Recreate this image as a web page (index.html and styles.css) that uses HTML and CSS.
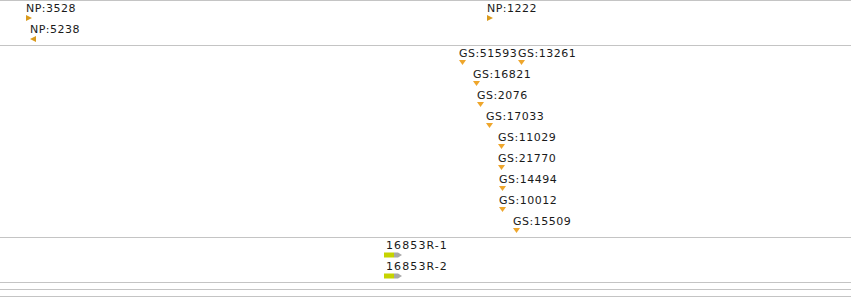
FILE: index.html
```html
<!DOCTYPE html>
<html lang="en">
<head>
  <meta charset="UTF-8" />
  <title>Tracks</title>
  <link rel="stylesheet" href="styles.css">
</head>
<body>
  <div class="tracks">
    <div class="track track-np">
      <div class="feat" style="left:26px;top:1px">
        <span class="label">NP:3528</span>
        <svg class="tri" width="7" height="6"><polygon points="0,0 6,3 0,6" /></svg>
      </div>
      <div class="feat" style="left:30px;top:22px">
        <span class="label">NP:5238</span>
        <svg class="tri" width="7" height="6"><polygon points="6,0 0,3 6,6" /></svg>
      </div>
      <div class="feat" style="left:487px;top:1px">
        <span class="label">NP:1222</span>
        <svg class="tri" width="7" height="6"><polygon points="0,0 6,3 0,6" /></svg>
      </div>
    </div>

    <div class="track track-gs">
      <div class="feat" style="left:459px;top:1px"><span class="label">GS:51593</span><svg class="down" width="7" height="6"><polygon points="0,0 7,0 3.5,5" /></svg></div>
      <div class="feat" style="left:518px;top:1px"><span class="label">GS:13261</span><svg class="down" width="7" height="6"><polygon points="0,0 7,0 3.5,5" /></svg></div>
      <div class="feat" style="left:473px;top:22px"><span class="label">GS:16821</span><svg class="down" width="7" height="6"><polygon points="0,0 7,0 3.5,5" /></svg></div>
      <div class="feat" style="left:477px;top:43px"><span class="label">GS:2076</span><svg class="down" width="7" height="6"><polygon points="0,0 7,0 3.5,5" /></svg></div>
      <div class="feat" style="left:486px;top:64px"><span class="label">GS:17033</span><svg class="down" width="7" height="6"><polygon points="0,0 7,0 3.5,5" /></svg></div>
      <div class="feat" style="left:498px;top:85px"><span class="label">GS:11029</span><svg class="down" width="7" height="6"><polygon points="0,0 7,0 3.5,5" /></svg></div>
      <div class="feat" style="left:498px;top:106px"><span class="label">GS:21770</span><svg class="down" width="7" height="6"><polygon points="0,0 7,0 3.5,5" /></svg></div>
      <div class="feat" style="left:499px;top:127px"><span class="label">GS:14494</span><svg class="down" width="7" height="6"><polygon points="0,0 7,0 3.5,5" /></svg></div>
      <div class="feat" style="left:499px;top:148px"><span class="label">GS:10012</span><svg class="down" width="7" height="6"><polygon points="0,0 7,0 3.5,5" /></svg></div>
      <div class="feat" style="left:513px;top:169px"><span class="label">GS:15509</span><svg class="down" width="7" height="6"><polygon points="0,0 7,0 3.5,5" /></svg></div>
    </div>

    <div class="track track-gene">
      <div class="feat" style="left:384px;top:1px">
        <span class="label gene-label">16853R-1</span>
        <svg class="gene" width="19" height="6"><rect x="0" y="0.5" width="10" height="5" class="cds" /><polygon points="10,0.5 14,0.5 18,3 14,5.5 10,5.5" class="utr" /></svg>
      </div>
      <div class="feat" style="left:384px;top:22px">
        <span class="label gene-label">16853R-2</span>
        <svg class="gene" width="19" height="6"><rect x="0" y="0.5" width="10" height="5" class="cds" /><polygon points="10,0.5 14,0.5 18,3 14,5.5 10,5.5" class="utr" /></svg>
      </div>
    </div>

    <div class="track track-empty"></div>
    <div class="track track-empty"></div>
  </div>
</body>
</html>
```

FILE: styles.css
```css
html, body {
  margin: 0;
  background: #fff;
  font-family: 'DejaVu Sans', 'Liberation Sans', sans-serif;
}

.tracks {
  width: 851px;
  display: flex;
  flex-direction: column;
  border-bottom: 1px solid #c4c4c4;
}

.track {
  position: relative;
  border-top: 1px solid #c4c4c4;
}

.track-np   { height: 44px; }
.track-gs   { height: 191px; }
.track-gene { height: 44px; }
.track-empty { height: 6px; }

.feat {
  position: absolute;
  display: flex;
  flex-direction: column;
  align-items: flex-start;
}

.label {
  display: block;
  font-size: 11px;
  line-height: 13px;
  letter-spacing: 0.5px;
  color: #1a1a1a;
  white-space: nowrap;
}

.gene-label {
  padding-left: 2px;
  letter-spacing: 1.1px;
}

.tri, .down, .gene {
  display: block;
}

.tri polygon  { fill: #d99a1c; }
.down polygon { fill: #eea62c; }

.gene .cds { fill: #c6d300; }
.gene .utr { fill: #a8a8a8; }
```
